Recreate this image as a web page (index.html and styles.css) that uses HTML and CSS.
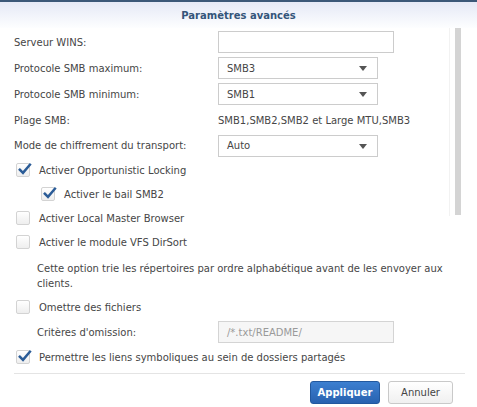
FILE: index.html
```html
<!DOCTYPE html>
<html lang="fr">
<head>
<meta charset="utf-8">
<link rel="stylesheet" href="styles.css">
</head>
<body>
<div class="dialog">
  <div class="header">Paramètres avancés</div>
  <div class="content">
    <div class="form">
      <div class="row field-row">
        <span class="label">Serveur WINS:</span>
        <span class="input wide"></span>
      </div>
      <div class="row field-row">
        <span class="label">Protocole SMB maximum:</span>
        <span class="select">SMB3<i class="arrow"></i></span>
      </div>
      <div class="row field-row">
        <span class="label">Protocole SMB minimum:</span>
        <span class="select">SMB1<i class="arrow"></i></span>
      </div>
      <div class="row field-row">
        <span class="label">Plage SMB:</span>
        <span class="value">SMB1,SMB2,SMB2 et Large MTU,SMB3</span>
      </div>
      <div class="row field-row last-field">
        <span class="label">Mode de chiffrement du transport:</span>
        <span class="select">Auto<i class="arrow"></i></span>
      </div>
      <div class="row check-row">
        <span class="cb checked"><svg viewBox="0 0 16 16"><path d="M3 8.2 L6.4 11.6 L13.8 2.8" /></svg></span>
        <span class="cb-label">Activer Opportunistic Locking</span>
      </div>
      <div class="row check-row indent">
        <span class="cb checked"><svg viewBox="0 0 16 16"><path d="M3 8.2 L6.4 11.6 L13.8 2.8" /></svg></span>
        <span class="cb-label">Activer le bail SMB2</span>
      </div>
      <div class="row check-row">
        <span class="cb"></span>
        <span class="cb-label">Activer Local Master Browser</span>
      </div>
      <div class="row check-row">
        <span class="cb"></span>
        <span class="cb-label">Activer le module VFS DirSort</span>
      </div>
      <p class="desc">Cette option trie les répertoires par ordre alphabétique avant de les envoyer aux clients.</p>
      <div class="row check-row">
        <span class="cb"></span>
        <span class="cb-label">Omettre des fichiers</span>
      </div>
      <div class="row field-row crit">
        <span class="label sub">Critères d'omission:</span>
        <span class="input wide disabled">/*.txt/README/</span>
      </div>
      <div class="row check-row">
        <span class="cb checked"><svg viewBox="0 0 16 16"><path d="M3 8.2 L6.4 11.6 L13.8 2.8" /></svg></span>
        <span class="cb-label">Permettre les liens symboliques au sein de dossiers partagés</span>
      </div>
    </div>
    <div class="scrollbar"><div class="thumb"></div></div>
  </div>
  <div class="footer">
    <button class="btn primary">Appliquer</button>
    <button class="btn">Annuler</button>
  </div>
</div>
</body>
</html>
```
FILE: styles.css
```css
html, body {
  margin: 0;
  padding: 0;
  background: #ffffff;
}
body {
  font-family: "DejaVu Sans", Verdana, sans-serif;
  font-size: 10px;
  color: #464646;
  width: 477px;
  height: 407px;
  overflow: hidden;
}
.dialog {
  width: 477px;
  height: 407px;
  display: flex;
  flex-direction: column;
}
.header {
  border-top: 2px solid #3b5878;
  background: linear-gradient(#e5e9f6, #fdfeff);
  display: flex;
  align-items: center;
  justify-content: center;
  font-weight: bold;
  color: #34557a;
  font-size: 10px;
  padding-top: 1px;
  box-sizing: border-box;
  height: 28px;
}
.content {
  position: relative;
  height: 345px;
  padding: 1px 0 0 14px;
  box-sizing: border-box;
}
.form {
  display: flex;
  flex-direction: column;
  width: 430px;
}
.row {
  display: flex;
  align-items: center;
}
.field-row {
  height: 26px;
}
.last-field {
  height: 25px;
}
.label {
  width: 204px;
  flex: none;
}
.label.sub {
  padding-left: 23px;
  width: 181px;
}
.input, .select {
  height: 22px;
  box-sizing: border-box;
  border: 1px solid #cccccc;
  background: #fff;
  display: flex;
  align-items: center;
  padding-left: 8px;
  color: #464646;
}
.input.wide {
  width: 176px;
}
.input.disabled {
  background: #f6f6f6;
  color: #9a9a9a;
  border-color: #d4d4d4;
}
.select {
  width: 160px;
  position: relative;
}
.arrow {
  position: absolute;
  right: 10px;
  top: 8px;
  width: 0;
  height: 0;
  border-left: 4px solid transparent;
  border-right: 4px solid transparent;
  border-top: 5px solid #555;
}
.check-row {
  height: 24px;
}
.check-row.indent {
  padding-left: 25px;
}
.cb {
  width: 14px;
  height: 14px;
  box-sizing: border-box;
  border: 1px solid #d3d3d3;
  border-radius: 2px;
  background: linear-gradient(#ffffff, #eeeeee);
  margin: 0 9px 0 2px;
  position: relative;
  flex: none;
}
.cb svg {
  position: absolute;
  left: 0px;
  top: -2px;
  width: 15px;
  height: 15px;
  overflow: visible;
}
.cb svg path {
  fill: none;
  stroke: #2b5c97;
  stroke-width: 2.6;
  stroke-linecap: square;
}
.desc {
  margin: 7px 0 4px 23px;
  line-height: 15px;
  width: 420px;
}
.crit {
  height: 26px;
}
.scrollbar {
  position: absolute;
  top: 0;
  right: 14px;
  width: 14px;
  height: 188px;
  border-left: 1px solid #f2f2f2;
  box-sizing: border-box;
}
.thumb {
  position: absolute;
  right: 2px;
  top: 0;
  width: 6px;
  height: 187px;
  background: #d4d4d4;
}
.footer {
  margin: 0 12px 0 14px;
  border-top: 1px solid #e4e4e4;
  display: flex;
  justify-content: flex-end;
  gap: 8px;
  padding: 7px 12px 0 0;
}
.btn {
  font-family: "DejaVu Sans", Verdana, sans-serif;
  font-size: 10px;
  height: 23px;
  border-radius: 3px;
  border: 1px solid #c9c9c9;
  background: linear-gradient(#ffffff, #f0f0f0);
  color: #444;
  width: 65px;
  padding: 0;
}
.btn.primary {
  width: 70px;
  background: linear-gradient(#3c7fd0, #2862b0);
  border-color: #22589e;
  color: #fff;
  font-weight: bold;
}
```
